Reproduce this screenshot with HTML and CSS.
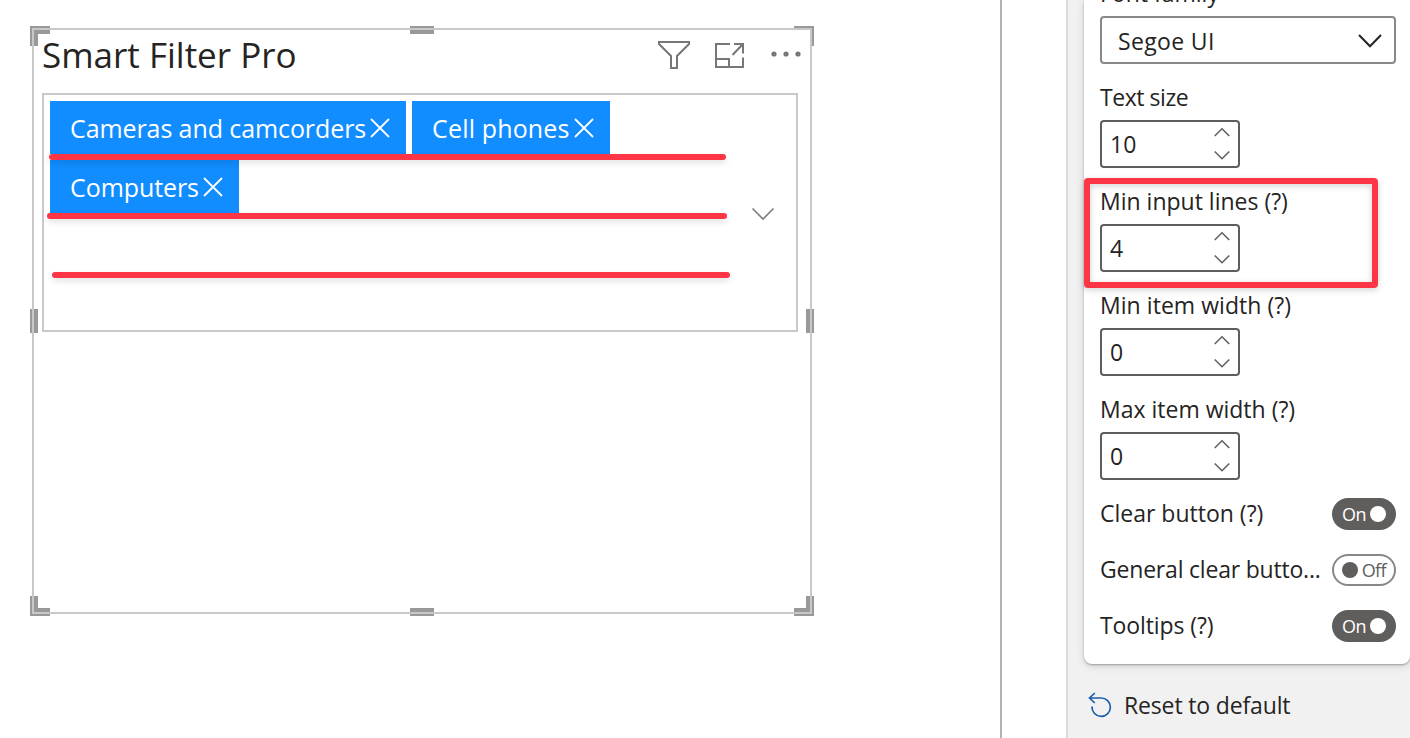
FILE: index.html
```html
<!DOCTYPE html>
<html lang="en">
<head>
<meta charset="utf-8">
<title>Smart Filter Pro</title>
<link rel="stylesheet" href="styles.css">
</head>
<body>
<main class="canvas">
  <section class="visual">
    <i class="handle tl"></i><i class="handle tr"></i><i class="handle bl"></i><i class="handle br"></i>
    <i class="handle top"></i><i class="handle bottom"></i><i class="handle left"></i><i class="handle right"></i>
    <div class="frame">
      <header class="visual-header">
        <h1 class="title">Smart Filter Pro</h1>
        <div class="actions">
          <svg width="34" height="30" viewBox="0 0 34 30"><path d="M2 2H32V4L20 16V28H14V16L2 4Z"/></svg>
          <svg class="focus" width="30" height="26" viewBox="0 0 30 26"><path d="M15 1H1V24H28V14.500M1 16H14V24M19 1H28V10.500M27.500 1.500L17.500 12"/></svg>
          <svg class="dots" width="32" height="6" viewBox="0 0 32 6"><circle cx="3" cy="3" r="2.600"/><circle cx="15" cy="3" r="2.600"/><circle cx="27" cy="3" r="2.600"/></svg>
        </div>
      </header>
      <div class="input">
        <div class="tags">
          <span class="tag"><span class="tag-label t-cameras">Cameras and camcorders</span><svg class="x" width="20" height="20" viewBox="0 0 20 20"><path d="M1 1L19 19M19 1L1 19"/></svg></span>
          <span class="tag"><span class="tag-label t-cell">Cell phones</span><svg class="x" width="20" height="20" viewBox="0 0 20 20"><path d="M1 1L19 19M19 1L1 19"/></svg></span>
          <span class="tag"><span class="tag-label t-computers">Computers</span><svg class="x" width="20" height="20" viewBox="0 0 20 20"><path d="M1 1L19 19M19 1L1 19"/></svg></span>
        </div>
        <svg class="open" width="24" height="14" viewBox="0 0 24 14"><path d="M1.500 1.500L12 12L22.500 1.500"/></svg>
      </div>
    </div>
    <i class="mark m1"></i><i class="mark m2"></i><i class="mark m3"></i>
  </section>
</main>
<aside class="pane">
  <div class="card">
    <div class="field">
      <label class="label l-font">Font family</label>
      <div class="select"><span class="l-segoe">Segoe UI</span><svg width="24" height="14" viewBox="0 0 24 14"><path d="M1 1L12 12.300L23 1"/></svg></div>
    </div>
    <div class="field">
      <label class="label l-size">Text size</label>
      <div class="number"><span>10</span><svg width="16" height="34" viewBox="0 0 16 34"><path d="M.7 9L8 1.700L15.300 9M.7 24.500L8 31.800L15.300 24.500"/></svg></div>
    </div>
    <div class="field">
      <label class="label l-lines">Min input lines (?)</label>
      <div class="number"><span>4</span><svg width="16" height="34" viewBox="0 0 16 34"><path d="M.7 9L8 1.700L15.300 9M.7 24.500L8 31.800L15.300 24.500"/></svg></div>
      <i class="callout"></i>
    </div>
    <div class="field">
      <label class="label l-min">Min item width (?)</label>
      <div class="number"><span>0</span><svg width="16" height="34" viewBox="0 0 16 34"><path d="M.7 9L8 1.700L15.300 9M.7 24.500L8 31.800L15.300 24.500"/></svg></div>
    </div>
    <div class="field">
      <label class="label l-max">Max item width (?)</label>
      <div class="number"><span>0</span><svg width="16" height="34" viewBox="0 0 16 34"><path d="M.7 9L8 1.700L15.300 9M.7 24.500L8 31.800L15.300 24.500"/></svg></div>
    </div>
    <div class="row"><span class="label l-clear">Clear button (?)</span><span class="toggle on"><span>On</span><i class="knob"></i></span></div>
    <div class="row"><span class="label l-general">General clear butto...</span><span class="toggle off"><i class="knob"></i><span>Off</span></span></div>
    <div class="row"><span class="label l-tips">Tooltips (?)</span><span class="toggle on"><span>On</span><i class="knob"></i></span></div>
  </div>
  <div class="reset">
    <svg width="24" height="26" viewBox="0 0 24 26"><path d="M6.800 1L1.500 6L6.800 11M1.500 6H13A9.200 9.200 0 1 1 4 14.500"/></svg>
    <span class="label l-reset">Reset to default</span>
  </div>
</aside>
</body>
</html>
```
FILE: styles.css
```css
* { box-sizing: border-box; }
body {
  margin: 0;
  width: 1410px;
  height: 738px;
  overflow: hidden;
  display: flex;
  background: #fff;
  color: #252423;
  font-family: "Open Sans", "Noto Sans", sans-serif;
}
svg { display: block; flex: none; fill: none; stroke-width: 2; }
.canvas {
  width: 1002px;
  height: 738px;
  padding: 26px 0 0 30px;
  border-right: 2px solid #b3b3b3;
}
.visual { position: relative; width: 784px; height: 590px; padding: 2px; }
.frame {
  position: relative;
  height: 586px;
  border: 2px solid #c8c8c8;
  padding: 0 12px 0 8px;
}
.handle { position: absolute; background: #999; }
.tl, .tr, .bl, .br { width: 20px; height: 20px; background: none; border: 0 solid #999; }
.tl { left: 0; top: 0; border-width: 8px 0 0 8px; }
.tr { right: 0; top: 0; border-width: 2px 2px 0 0; }
.bl { left: 0; bottom: 0; border-width: 0 0 8px 8px; }
.br { right: 0; bottom: 0; border-width: 0 8px 8px 0; }
.top, .bottom { left: 380px; width: 24px; height: 8px; }
.top { top: 0; }
.bottom { bottom: 0; }
.left, .right { top: 283px; width: 8px; height: 24px; }
.left { left: 0; }
.right { right: 0; }
.visual-header { display: flex; justify-content: space-between; height: 63px; }
.title { margin: 0; font-size: 35px; line-height: 50px; font-weight: 400; white-space: nowrap; }
.actions { display: flex; align-items: center; height: 50px; margin-right: -5px; stroke: #777; }
.focus { margin: 2px 24px 0; }
.dots { fill: #777; stroke: none; margin: -2px 0 0 2px; }
.input {
  width: 756px;
  height: 239px;
  border: 2px solid #c8c8c8;
  padding: 6px 21px 0 6px;
  display: flex;
  justify-content: space-between;
}
.tags { width: 640px; display: flex; flex-wrap: wrap; align-content: flex-start; gap: 6px; }
.tag {
  height: 53px;
  padding: 0 16px 0 20px;
  background: #118dff;
  color: #fff;
  display: flex;
  align-items: center;
  gap: 4px;
  font-size: 25px;
  white-space: nowrap;
  line-height: 54px;
}
.t-cameras { letter-spacing: -.09px; }
.t-cell { letter-spacing: .15px; }
.t-computers { letter-spacing: -.08px; }
.x { stroke: #fff; stroke-width: 1.800; }
.open { margin-top: 106px; stroke: #808080; stroke-width: 1.700; }
.mark {
  position: absolute;
  height: 6px;
  border-radius: 3px;
  background: #fd3545;
  box-shadow: 0 3px 6px rgba(0, 0, 0, .12);
}
.m1 { left: 19px; top: 128px; width: 677px; }
.m2 { left: 17px; top: 187px; width: 680px; }
.m3 { left: 22px; top: 246px; width: 678px; }

.pane { margin-left: 64px; width: 344px; height: 738px; border-left: 2px solid #dadada; background: #f1f1f1; padding-left: 16px; }
.card {
  width: 326px;
  height: 664px;
  padding: 0 14px 0 16px;
  background: #fff;
  border-radius: 0 0 8px 8px;
  box-shadow: 0 1px 2px rgba(0, 0, 0, .3), 0 2px 8px rgba(0, 0, 0, .13);
}
.label { display: block; white-space: nowrap; font-size: 23px; }
.field { position: relative; height: 104px; }
.field .label { height: 40px; line-height: 34px; }
.field:first-child { height: 80px; }
.field:first-child .label { display: flex; align-items: flex-end; height: 16px; line-height: 46px; }
.l-segoe { padding-top: 2px; letter-spacing: .35px; }
.l-size { letter-spacing: -.45px; }
.l-min { letter-spacing: .05px; }
.l-general { letter-spacing: -.2px; }
.l-tips { letter-spacing: -.1px; }
.l-reset { letter-spacing: -.15px; }
.select, .number {
  height: 48px;
  border: 2px solid #605e5c;
  border-radius: 4px;
  display: flex;
  align-items: center;
  justify-content: space-between;
  font-size: 23px;
  background: #fff;
  stroke: #605e5c;
}
.select { border-color: #8a8886; padding: 0 12px 0 16px; stroke: #252423; }
.select svg { margin-top: 2px; }
.number { width: 140px; padding: 0 8px; }
.number svg { stroke-width: 1.500; }
.callout {
  position: absolute;
  left: -16px;
  top: -6px;
  width: 294px;
  height: 110px;
  border: 6px solid #fd3545;
  border-radius: 4px;
  filter: drop-shadow(0 2px 3px rgba(0, 0, 0, .18));
}
.row { height: 56px; display: flex; align-items: center; justify-content: space-between; }
.row .label { padding-bottom: 2px; }
.row:nth-child(6) { margin-top: -10px; }
.toggle {
  width: 64px;
  height: 32px;
  border-radius: 16px;
  display: flex;
  align-items: center;
  justify-content: space-between;
  padding: 0 10px;
  font-size: 18px;
  letter-spacing: -.6px;
}
.on { background: #605e5c; color: #fff; }
.off { border: 2px solid #8a8886; color: #605e5c; padding: 0 8px; }
.knob { width: 16px; height: 16px; border-radius: 50%; background: #fff; }
.off .knob { background: #605e5c; }
.reset { display: flex; align-items: center; height: 80px; padding: 2px 0 0 4px; gap: 12px; }
.reset svg { stroke: #1b5fa8; stroke-width: 1.700; }
```
